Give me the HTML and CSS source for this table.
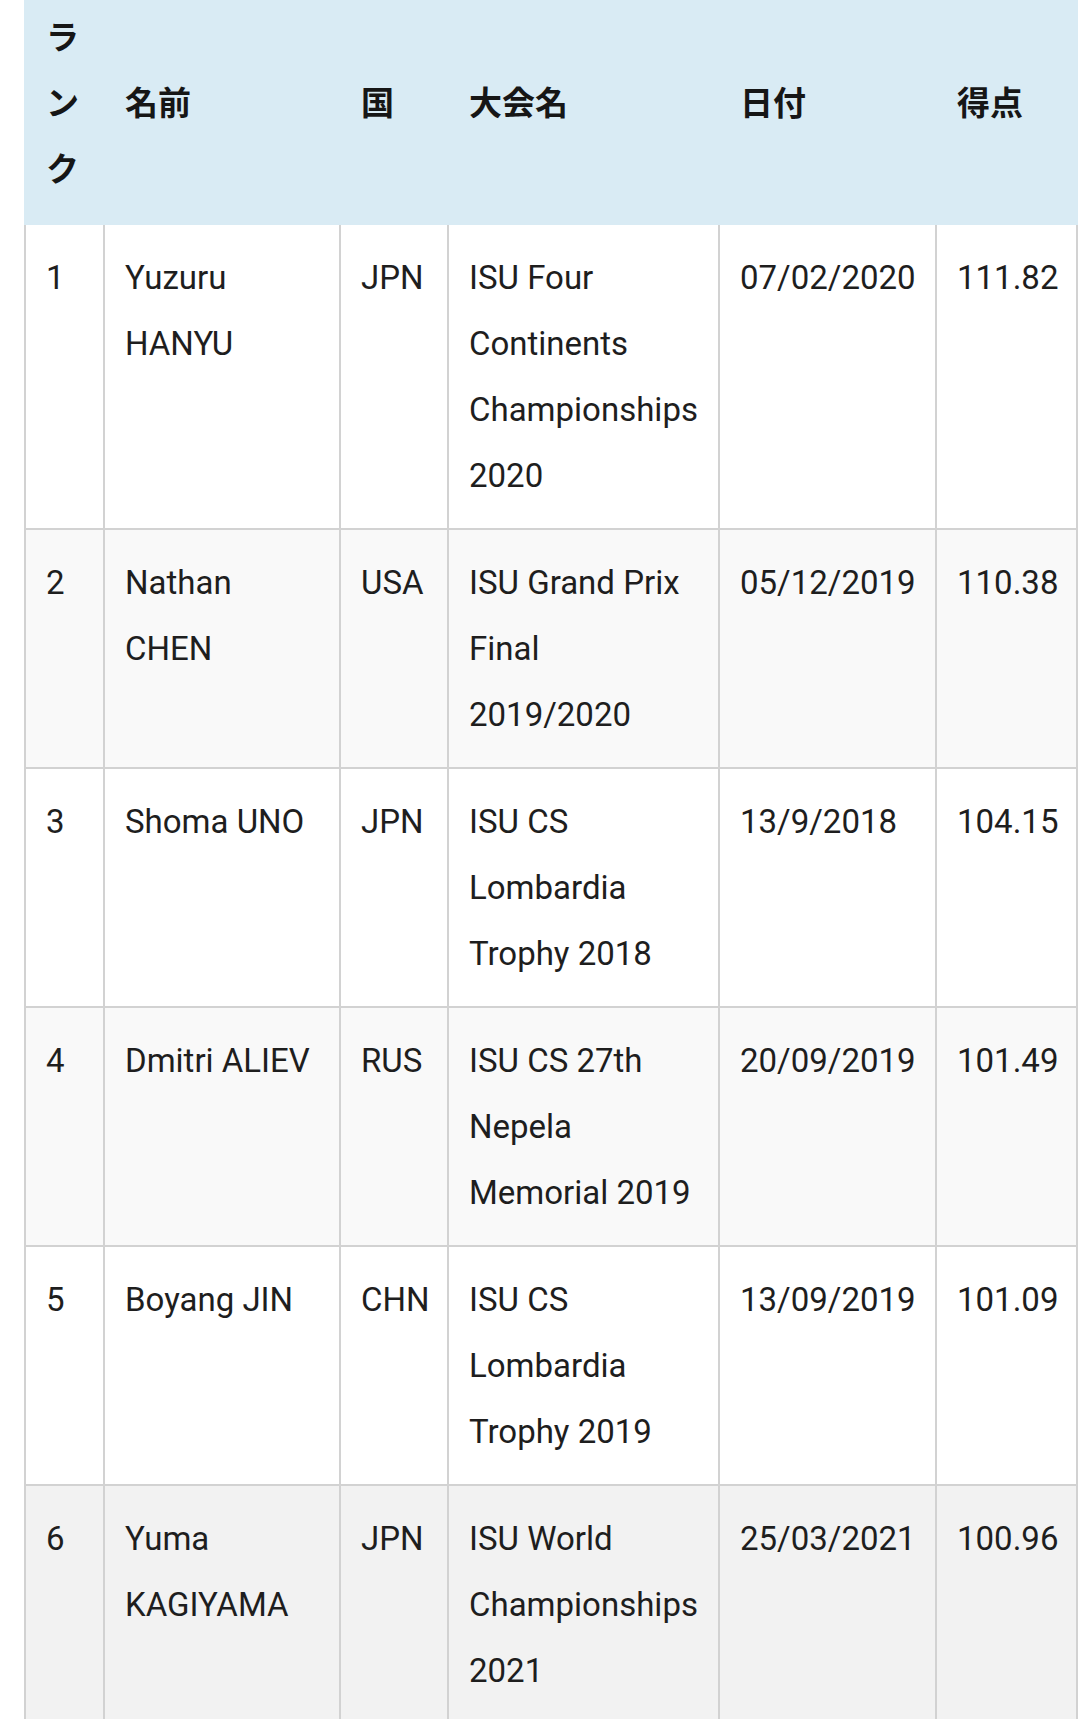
FILE: index.html
```html
<!DOCTYPE html>
<html lang="ja">
<head>
<meta charset="utf-8">
<title>ランキング</title>
<link rel="stylesheet" href="styles.css">
</head>
<body>
<table class="rank-table">
  <thead>
    <tr>
      <th class="c-rank">ランク</th>
      <th class="c-name">名前</th>
      <th class="c-nat">国</th>
      <th class="c-event">大会名</th>
      <th class="c-date">日付</th>
      <th class="c-score">得点</th>
    </tr>
  </thead>
  <tbody>
    <tr>
      <td>1</td>
      <td>Yuzuru HANYU</td>
      <td>JPN</td>
      <td>ISU Four Continents Championships 2020</td>
      <td>07/02/2020</td>
      <td>111.82</td>
    </tr>
    <tr class="alt">
      <td>2</td>
      <td>Nathan CHEN</td>
      <td>USA</td>
      <td>ISU Grand Prix Final 2019/2020</td>
      <td>05/12/2019</td>
      <td>110.38</td>
    </tr>
    <tr>
      <td>3</td>
      <td>Shoma UNO</td>
      <td>JPN</td>
      <td>ISU CS Lombardia Trophy 2018</td>
      <td>13/9/2018</td>
      <td>104.15</td>
    </tr>
    <tr class="alt">
      <td>4</td>
      <td>Dmitri ALIEV</td>
      <td>RUS</td>
      <td>ISU CS 27th Nepela Memorial 2019</td>
      <td>20/09/2019</td>
      <td>101.49</td>
    </tr>
    <tr>
      <td>5</td>
      <td>Boyang JIN</td>
      <td>CHN</td>
      <td>ISU CS Lombardia Trophy 2019</td>
      <td>13/09/2019</td>
      <td>101.09</td>
    </tr>
    <tr class="hl">
      <td>6</td>
      <td>Yuma KAGIYAMA</td>
      <td>JPN</td>
      <td>ISU World Championships 2021</td>
      <td>25/03/2021</td>
      <td>100.96</td>
    </tr>
  </tbody>
</table>
</body>
</html>
```

FILE: styles.css
```css
html, body {
  margin: 0;
  padding: 0;
  background: #ffffff;
}

body {
  font-family: Roboto, "Noto Sans CJK JP", sans-serif;
  color: #1e1e1e;
  overflow: hidden;
}

.rank-table {
  margin: -15px 0 0 24px;
  width: 1054px;
  table-layout: fixed;
  border-collapse: separate;
  border-spacing: 0;
  font-size: 33px;
  line-height: 66px;
}

.rank-table th,
.rank-table td {
  box-sizing: border-box;
  text-align: left;
  border-right: 2px solid #d2d2d2;
  border-bottom: 2px solid #d2d2d2;
}

.rank-table td {
  padding: 20px 20px 19px 20px;
}

.rank-table td:first-child,
.rank-table th:first-child {
  border-left: 2px solid #d2d2d2;
}

.rank-table th {
  padding: 17px 20px 23px 20px;
  font-family: "Noto Sans CJK JP", Roboto, sans-serif;
  font-weight: 700;
  vertical-align: middle;
  background: #d9ebf4;
  border-color: transparent;
  color: #161616;
}

.rank-table th:first-child {
  border-left-color: transparent;
}

.rank-table td {
  vertical-align: top;
  background: #ffffff;
}

.rank-table tr.alt td {
  background: #f9f9f9;
}

.rank-table tr.hl td {
  background: #f2f2f2;
}

.c-rank { width: 81px; }
.c-name { width: 236px; }
.c-nat { width: 108px; }
.c-event { width: 271px; }
.c-date { width: 217px; }
.c-score { width: 141px; }
```
